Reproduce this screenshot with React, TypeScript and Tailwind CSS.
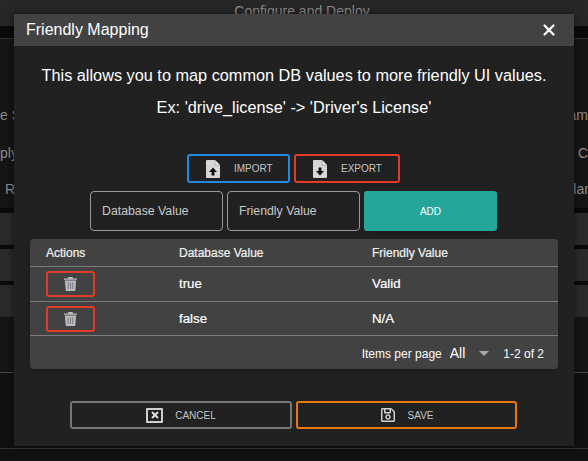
import { X } from 'lucide-react'
import { FaRegSave } from 'react-icons/fa'

function FileIcon({ down }: { down?: boolean }) {
  return (
    <svg width="14" height="18" viewBox="0 0 14 18">
      <path d="M1 0h8l5 5v12a1 1 0 0 1-1 1H1a1 1 0 0 1-1-1V1a1 1 0 0 1 1-1z" fill="#d6d6d6" />
      <path d="M9 0l5 5H9z" fill="#f0f0f0" stroke="#8a8a8a" strokeWidth="0.6" />
      {down ? (
        <path d="M5.6 7.5h2.8v3.5H11L7 15.5 3 11h2.6z" fill="#111111" />
      ) : (
        <path d="M7 7.5l4 4.5H8.4v3.5H5.6V12H3z" fill="#111111" />
      )}
    </svg>
  )
}

function TrashIcon() {
  return (
    <svg width="13" height="14" viewBox="0 0 14 15">
      <path d="M0 1.5h4.5V0h5v1.5H14V3H0z" fill="#bdbdbd" />
      <path d="M1 3.8h12l-.8 10.2a1 1 0 0 1-1 1H2.8a1 1 0 0 1-1-1z" fill="#bdbdbd" />
      <path d="M4.5 5.5v7.5M7 5.5v7.5M9.5 5.5v7.5" stroke="#7d7d8c" strokeWidth="1.2" />
    </svg>
  )
}

function CancelIcon() {
  return (
    <span className="flex h-[15px] w-[17px] items-center justify-center rounded-[1px] border-2 border-[#cfcfcf]">
      <X size={10} strokeWidth={4.5} className="text-[#e0e0e0]" />
    </span>
  )
}

function Row({ db, friendly, last }: { db: string; friendly: string; last?: boolean }) {
  return (
    <div className={`flex h-[35px] items-center border-t border-[#7c7c7c] text-[13.3px] text-white [-webkit-text-stroke:0.2px_white] ${last ? 'border-b' : ''}`}>
      <div className="w-[149px] pl-4">
        <div className="flex h-[26px] w-[49px] items-center justify-center rounded-[3px] border-2 border-[#e53a25]">
          <TrashIcon />
        </div>
      </div>
      <div className="w-[193px]">{db}</div>
      <div>{friendly}</div>
    </div>
  )
}

function BackRow({ left, right, className }: { left: string; right: string; className?: string }) {
  return (
    <div className={`flex h-[37px] items-center justify-between text-[14px] text-[#8c8c8c] ${className ?? ''}`}>
      <span>{left}</span>
      <span>{right}</span>
    </div>
  )
}

export default function App() {
  return (
    <div className="relative h-[461px] w-[588px] overflow-hidden bg-[#111111] font-['Liberation_Sans',Arial,sans-serif]">
      {/* dimmed page behind the dialog */}
      <div className="flex h-[26px] justify-center bg-[#272727] pl-4 pt-[1px] text-[14px] text-[#8c8c8c]">Configure and Deploy</div>
      <div className="h-[12px] bg-[#0a0a0a]" />
      <div className="h-[170px] overflow-hidden border-t border-[#333333] bg-[#151515] pt-[58px]">
        <BackRow left="e S" right="am" />
        <BackRow left="ply" right="C" className="pt-[2px]" />
        <BackRow left="R" right="lan" className="-mr-1 pl-[5px]" />
      </div>
      <div className="flex h-[109px] flex-col bg-[#0a0a0a] pt-[5px]">
        <div className="h-[32px] bg-[#2a2a2a]" />
        <div className="mt-[4px] h-[32px] bg-[#2a2a2a]" />
        <div className="mt-[4px] h-[32px] bg-[#2a2a2a]" />
      </div>
      <div className="h-[56px] border-b border-[#444444] bg-[#151515]" />
      <div className="h-[76px] border-b border-[#333333] bg-[#101010]" />

      <div className="absolute left-[14px] top-[14px] flex h-[432px] w-[560px] flex-col bg-[#212121] shadow-[0_0_8px_rgba(0,0,0,0.5)]">
        <div className="flex h-[32px] shrink-0 items-center justify-between bg-[#424242] pl-3 pr-4 text-[16px] text-white">
          <span>Friendly Mapping</span>
          <X size={18} strokeWidth={3} />
        </div>

        <div className="mt-[20px] text-center text-[16.3px] leading-[18px] text-white">
          This allows you to map common DB values to more friendly UI values.
        </div>
        <div className="mt-[14px] text-center text-[16.3px] leading-[18px] text-white">
          Ex: 'drive_license' -&gt; 'Driver's License'
        </div>

        <div className="mt-[38px] flex justify-center gap-[4px] pr-[1px]">
          <button className="flex h-[29px] w-[103px] items-center gap-[14px] rounded-[3px] border-2 border-[#2189e0] pl-[17px] text-[10px] text-[#c4c4c4]">
            <FileIcon />
            IMPORT
          </button>
          <button className="flex h-[29px] w-[106px] items-center gap-[14px] rounded-[3px] border-2 border-[#e53a25] pl-[17px] text-[10px] text-[#c4c4c4]">
            <FileIcon down />
            EXPORT
          </button>
        </div>

        <div className="mt-[8px] flex gap-[4px] pl-[76px]">
          <div className="flex h-[40px] w-[133px] items-center rounded-[4px] border border-[#9a9a9a] pl-[11px] text-[12.3px] text-[#c8c8c8]">Database Value</div>
          <div className="flex h-[40px] w-[133px] items-center rounded-[4px] border border-[#9a9a9a] pl-[11px] text-[12.3px] text-[#c8c8c8]">Friendly Value</div>
          <button className="flex h-[40px] w-[133px] items-center justify-center rounded-[3px] bg-[#26a69a] text-[10px] text-white shadow-md">ADD</button>
        </div>

        <div className="mx-4 mt-[8px] rounded-[4px] bg-[#424242] shadow-md">
          <div className="flex h-[27px] items-center text-[12px] text-[#f2f2f2] [-webkit-text-stroke:0.2px_#f2f2f2]">
            <div className="w-[149px] pl-4">Actions</div>
            <div className="w-[193px]">Database Value</div>
            <div>Friendly Value</div>
          </div>
          <Row db="true" friendly="Valid" />
          <Row db="false" friendly="N/A" last />
          <div className="flex h-[33px] items-center justify-end pr-[14px] pt-[2px] text-[12px] text-white">
            <span>Items per page</span>
            <span className="ml-2 text-[14px]">All</span>
            <span className="ml-[14px] h-0 w-0 border-x-[5px] border-t-[5px] border-x-transparent border-t-[#a8a8a8]" />
            <span className="ml-[14px]">1-2 of 2</span>
          </div>
        </div>

        <div className="mt-[32px] flex justify-center gap-[4px] pr-[1px]">
          <button className="flex h-[28px] w-[222px] items-center justify-center gap-3 rounded-[3px] border-2 border-[#757575] text-[10px] text-[#c4c4c4]">
            <CancelIcon />
            CANCEL
          </button>
          <button className="flex h-[28px] w-[221px] items-center justify-center gap-3 rounded-[3px] border-2 border-[#e8780c] text-[10px] text-[#c4c4c4]">
            <FaRegSave size={16} className="text-[#d0d0d0]" />
            SAVE
          </button>
        </div>
      </div>
    </div>
  )
}
